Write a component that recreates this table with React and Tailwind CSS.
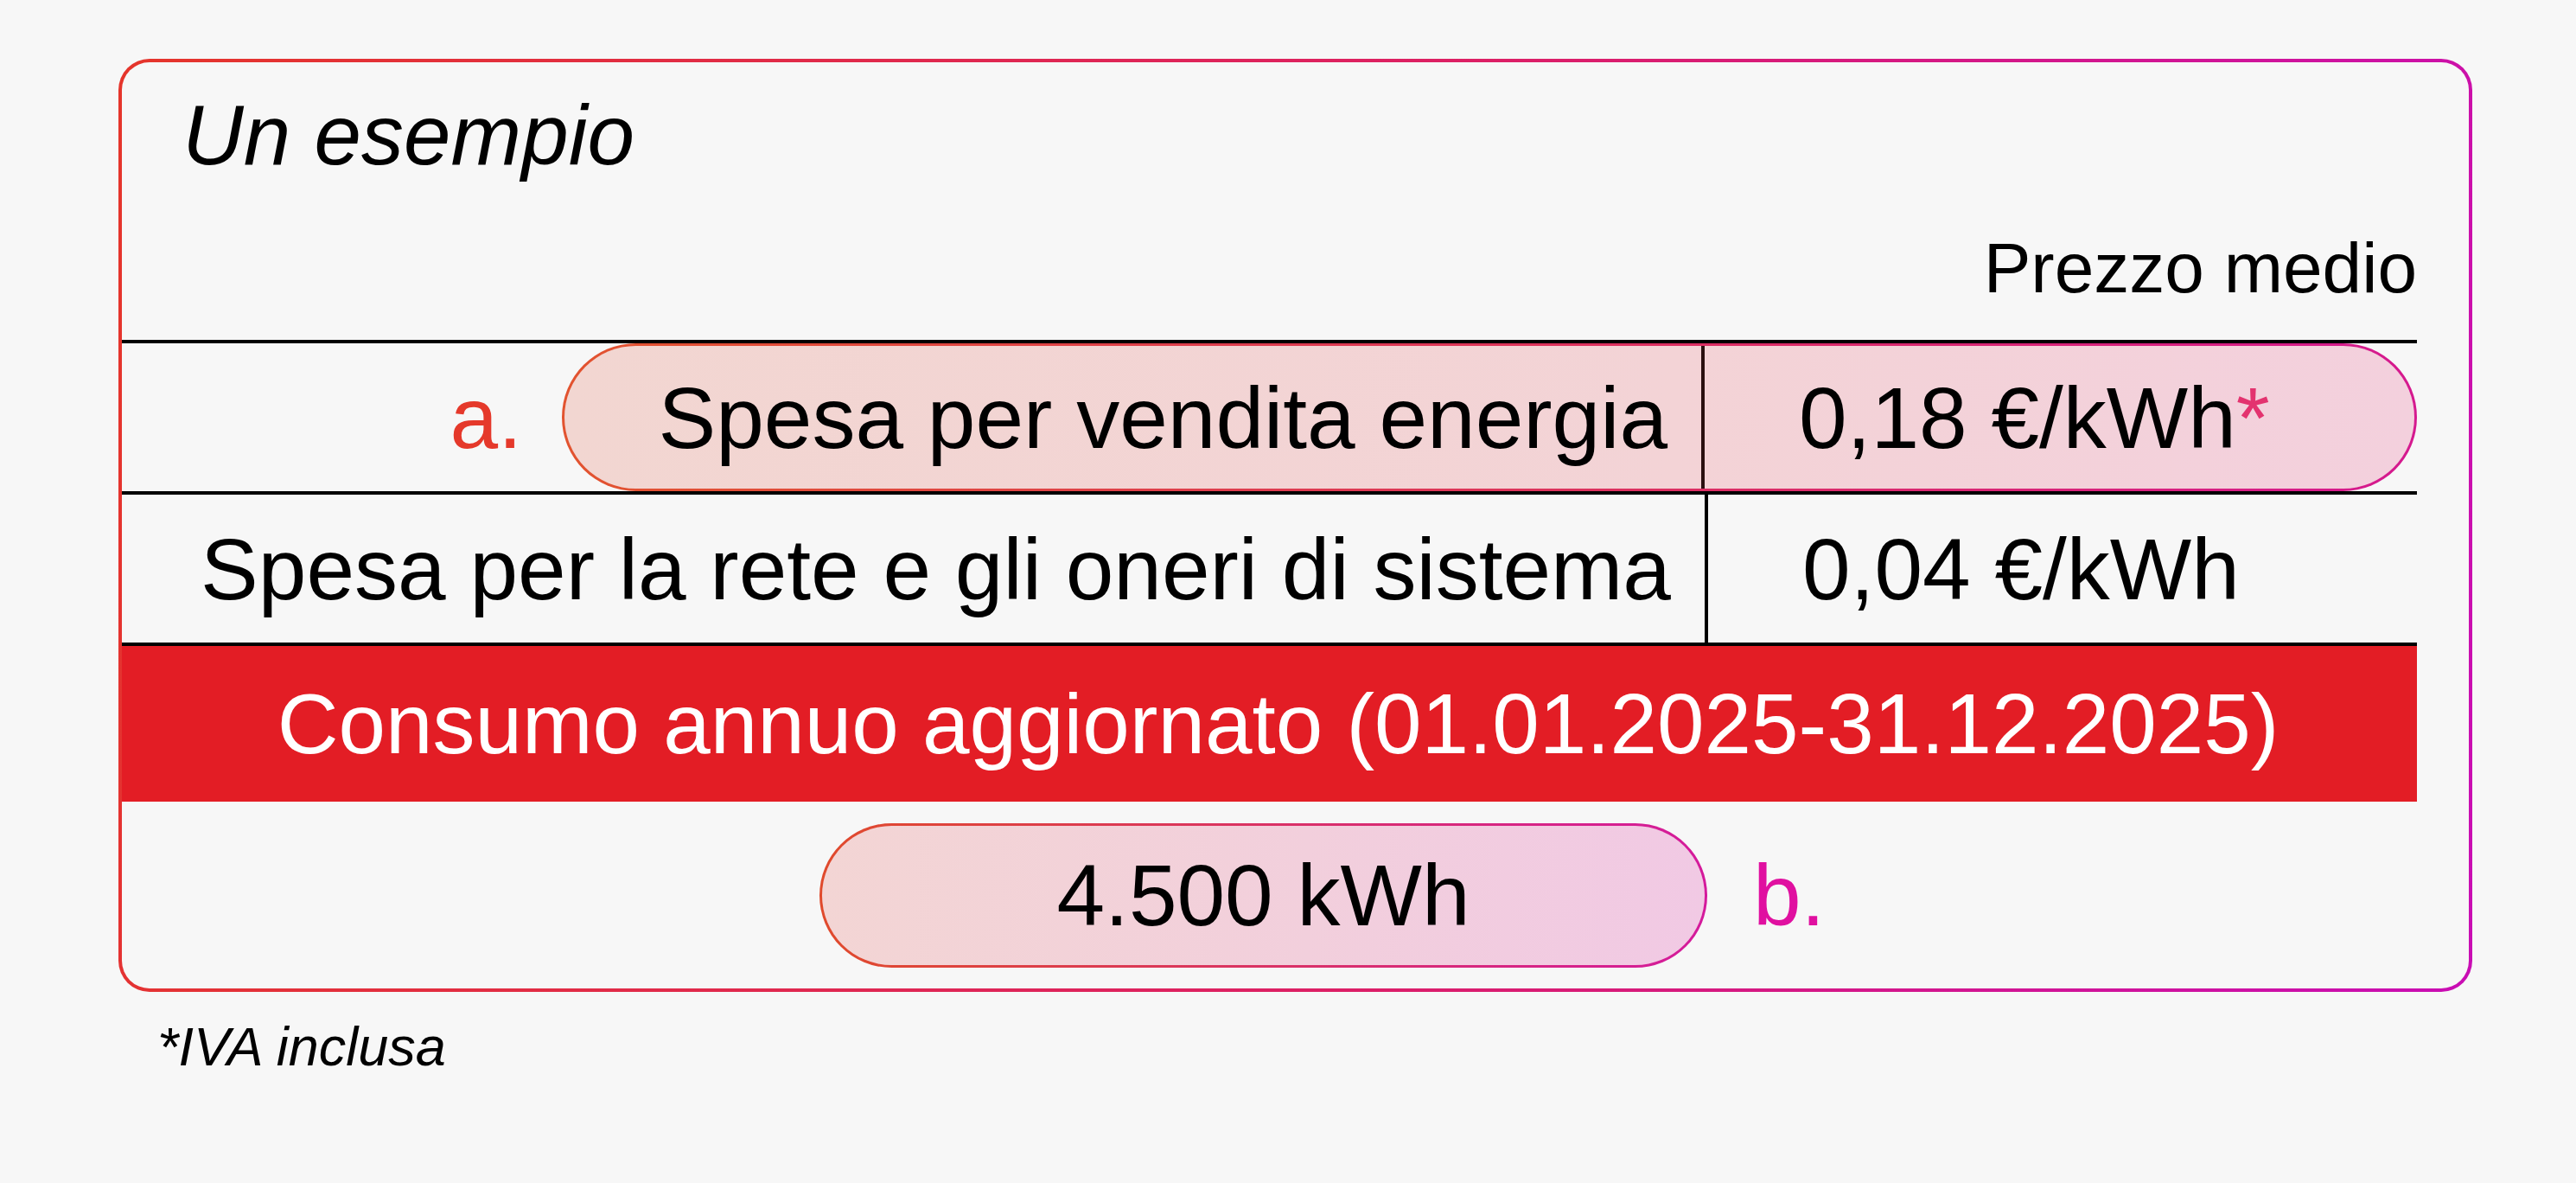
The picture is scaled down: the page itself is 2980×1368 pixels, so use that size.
export default function App() {
  return (
    <div className="min-h-screen bg-[#f7f7f7] pt-[68px] pl-[137px] font-['Liberation_Sans',Arial,sans-serif] text-black">
      <div className="w-[2723px] rounded-[36px] p-[4px] bg-[linear-gradient(100deg,#e5352b_0%,#dc1f66_55%,#c90db4_100%)]">
        <div className="h-[1071px] rounded-[32px] bg-[#f7f7f7] pr-[60px] flex flex-col">
          {/* header */}
          <div className="h-[321px] flex flex-col">
            <div className="pl-[70px] pt-[35px] text-[98px] leading-none italic">Un esempio</div>
            <div className="mt-[64px] text-right text-[82px] leading-none">Prezzo medio</div>
          </div>
          <div className="h-[4px] bg-black" />

          {/* row 1 */}
          <div className="h-[171px] flex text-[100px] leading-none">
            <div className="w-[509px] flex items-center justify-end pr-[46px] text-[#e5392b]">a.</div>
            <div className="flex-1 rounded-full p-[3px] bg-[linear-gradient(90deg,#e2532f,#dc2f62_60%,#d5198f)]">
              <div className="h-full rounded-full flex bg-[linear-gradient(90deg,#f2d6d1,#f3d3d6_60%,#f3d0dd)]">
                <div className="w-[1319px] border-r-4 border-[#2a1010] flex items-center justify-end pr-[39px]">
                  Spesa per vendita energia
                </div>
                <div className="flex-1 flex items-center pl-[109px]">
                  0,18 €/kWh<span className="text-[#e3336f]">*</span>
                </div>
              </div>
            </div>
          </div>
          <div className="h-[4px] bg-black" />

          {/* row 2 */}
          <div className="h-[171px] flex text-[100px] leading-none">
            <div className="w-[1835px] border-r-4 border-black flex items-center justify-end pr-[39px]">
              Spesa per la rete e gli oneri di sistema
            </div>
            <div className="flex-1 flex items-center pl-[109px]">0,04 €/kWh</div>
          </div>
          <div className="h-[4px] bg-black" />

          {/* red band */}
          <div className="h-[180px] bg-[#e31d25] flex items-center justify-center pl-[20px] text-white text-[98px] leading-none">
            Consumo annuo aggiornato (01.01.2025-31.12.2025)
          </div>

          {/* row 4 */}
          <div className="flex-1 grid grid-cols-[1fr_auto_1fr] items-center pr-[14px] text-[100px] leading-none">
            <div />
            <div className="w-[1027px] h-[167px] rounded-full p-[3px] bg-[linear-gradient(90deg,#e04a2c,#d9306a_55%,#d41a9c)]">
              <div className="h-full rounded-full flex items-center justify-center bg-[linear-gradient(90deg,#f3d5d4,#f2cfdc_55%,#f1c9e4)]">
                4.500 kWh
              </div>
            </div>
            <div className="pl-[53px] text-[#e010a0]">b.</div>
          </div>
        </div>
      </div>
      <div className="mt-[32px] pl-[45px] text-[63px] leading-none italic">*IVA inclusa</div>
    </div>
  );
}
